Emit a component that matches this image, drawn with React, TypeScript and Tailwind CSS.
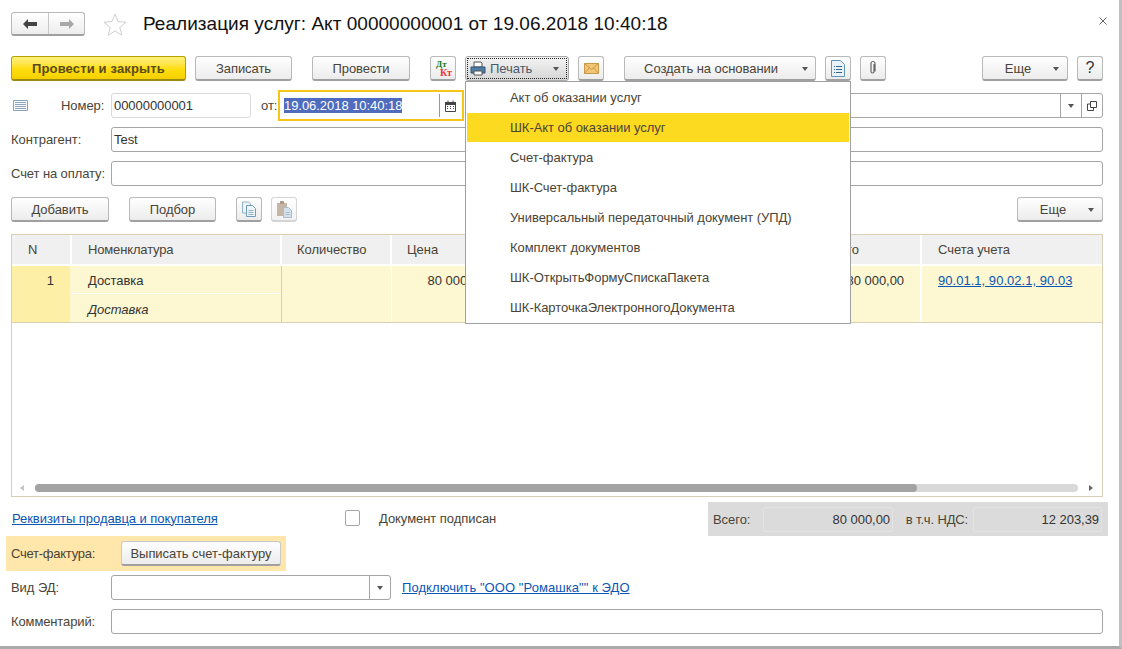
import type { ReactNode } from 'react';

const Caret = () => <span className="w-0 h-0 border-x-[3.5px] border-x-transparent border-t-[4px] border-t-[#555] inline-block" />;

const Btn = ({ className = '', children }: { className?: string; children?: ReactNode }) => (
  <div className={`h-[25px] flex items-center justify-center rounded-[3px] border border-[#b9b9b9] border-b-[2px] border-b-[#a0a0a0] bg-gradient-to-b from-white to-[#ececec] text-[#4a4436] ${className}`}>
    {children}
  </div>
);

const Field = ({ className = '', children }: { className?: string; children?: ReactNode }) => (
  <div className={`h-[25px] flex items-center rounded-[3px] border border-[#a5a5a5] bg-white pl-[2px] text-[#333] ${className}`}>
    {children}
  </div>
);

const Label = ({ className = '', children }: { className?: string; children?: ReactNode }) => (
  <span className={`text-[#4a4436] ${className}`}>{children}</span>
);

const menuItems = [
  'Акт об оказании услуг',
  'ШК-Акт об оказании услуг',
  'Счет-фактура',
  'ШК-Счет-фактура',
  'Универсальный передаточный документ (УПД)',
  'Комплект документов',
  'ШК-ОткрытьФормуСпискаПакета',
  'ШК-КарточкаЭлектронногоДокумента',
];

const DocIcon = () => (
  <svg width="14" height="17" viewBox="0 0 14 17">
    <path d="M.5.500h9l4 4v12H.5z" fill="#eaf2f8" stroke="#5f93b8" />
    <path d="M3 6.500h1M5 6.500h6M3 9.500h1M5 9.500h6M3 12.500h1M5 12.500h6" stroke="#2f6690" />
  </svg>
);

const App = () => {
  return (
    <div className="w-[1122px] h-[649px] bg-white overflow-hidden relative text-[13px] leading-none tracking-[-0.05px]" style={{ fontFamily: '"Liberation Sans", Arial, sans-serif' }}>
      <div className="w-[1122px] h-[649px] border-r-[3px] border-r-[#c0c0c0] border-b-[3px] border-b-[#a9a9a9]">
        <div className="w-full h-full pl-[11px] pr-[16px] flex flex-col">
          {/* header */}
          <div className="h-[56px] pt-[12px] flex items-start">
            <div className="h-[24px] w-[74px] flex rounded-[3px] border border-[#b9b9b9] border-b-[2px] border-b-[#a0a0a0] bg-gradient-to-b from-white to-[#ededed]">
              <div className="w-[37px] flex items-center justify-center border-r border-[#c8c8c8]">
                <svg width="14" height="10" viewBox="0 0 14 10"><path d="M0 5l5-5v3h9v4H5v3z" fill="#444" /></svg>
              </div>
              <div className="flex-1 flex items-center justify-center">
                <svg width="14" height="10" viewBox="0 0 14 10"><path d="M14 5L9 0v3H0v4h9v3z" fill="#a8a8a8" /></svg>
              </div>
            </div>
            <svg className="ml-[18px] mt-[1px]" width="24" height="23" viewBox="0 0 24 23">
              <path d="M12 1l3 7.600 8 .6-6.200 5.100 2 7.900L12 17.900 5.200 22.300l2-7.900L1 9.200l8-.6z" fill="#fff" stroke="#cfcfcf" />
            </svg>
            <h1 className="ml-[16px] text-[19px] leading-[24px] text-[#111] whitespace-nowrap tracking-[0.03px] font-normal">Реализация услуг: Акт 00000000001 от 19.06.2018 10:40:18</h1>
            <svg className="ml-auto -mr-[4px] mt-[5px]" width="8" height="8" viewBox="0 0 8 8"><path d="M.5.500l7 7M7.500.500l-7 7" stroke="#666" /></svg>
          </div>

          {/* command bar */}
          <div className="h-[25px] flex items-start">
            <div className="w-[175px] h-[25px] flex items-center justify-center rounded-[3px] border border-[#b8a000] border-b-[2px] border-b-[#9c8a10] bg-gradient-to-b from-[#fff27a] via-[#ffdf10] to-[#f5d000] font-bold text-[#5a4a1e] tracking-[0.15px]">Провести и закрыть</div>
            <Btn className="w-[97px] ml-[9px]">Записать</Btn>
            <Btn className="w-[98px] ml-[20px]">Провести</Btn>
            <Btn className="w-[26px] ml-[20px]">
              <span className="relative block w-[20px] h-[19px] font-bold" style={{ fontFamily: '"Liberation Serif", serif' }}>
                <span className="absolute left-[3px] top-[1px] text-[#1b7a1b] text-[9px]">Дт</span>
                <span className="absolute left-[7px] top-[9px] text-[#f03030] text-[10px]">Кт</span>
              </span>
            </Btn>
            <div className="w-[104px] ml-[9px] h-[25px] p-[1px] rounded-[3px] border border-[#a9a9a9] bg-gradient-to-b from-[#f4f4f4] to-[#d6d6d6]">
              <div className="h-full flex items-center border border-dotted border-[#222] pl-[2px] pr-[7px]">
                <svg width="16" height="15" viewBox="0 0 16 15">
                  <path d="M4 1h7l1 1v4H4z" fill="#fff" stroke="#555" />
                  <path d="M1 6h14v6H1z" fill="#4f7da3" stroke="#2f5675" />
                  <path d="M4 10h8v4H4z" fill="#fff" stroke="#555" />
                </svg>
                <span className="ml-[4px] text-[#4a5a6a]">Печать</span>
                <span className="ml-auto flex"><Caret /></span>
              </div>
            </div>
            <Btn className="w-[26px] ml-[9px]">
              <svg width="15" height="11" viewBox="0 0 15 11">
                <path d="M.5.500h14v10H.5z" fill="#f3c677" stroke="#c99a45" />
                <path d="M.5.500l7 6 7-6M.5 10.500l5-6M14.500 10.500l-5-6" fill="none" stroke="#c99a45" />
              </svg>
            </Btn>
            <Btn className="w-[192px] ml-[20px] relative pr-[18px]">
              Создать на основании
              <span className="absolute right-[7px] top-[10px] flex"><Caret /></span>
            </Btn>
            <Btn className="w-[26px] ml-[9px]"><DocIcon /></Btn>
            <Btn className="w-[26px] ml-[9px]">
              <svg width="8" height="16" viewBox="0 0 8 16">
                <path d="M5 4v7.500a1.500 1.500 0 01-3 0V3.500a2 2 0 014 0V11.500" fill="none" stroke="#666" strokeWidth="1.200" />
              </svg>
            </Btn>
            <Btn className="w-[86px] ml-auto relative pr-[14px]">
              Еще
              <span className="absolute right-[8px] top-[10px] flex"><Caret /></span>
            </Btn>
            <Btn className="w-[26px] ml-[9px] text-[16px] text-[#333]">?</Btn>
          </div>

          {/* number row */}
          <div className="h-[25px] mt-[12px] flex items-center">
            <svg className="ml-[2px] shrink-0" width="15" height="11" viewBox="0 0 15 11">
              <path d="M.5.500h14v10H.5z" fill="#f7fafc" stroke="#8aa3b5" />
              <path d="M2 2.500h11M2 4.500h11M2 6.500h11M2 8.500h11" stroke="#8fa8b8" />
            </svg>
            <Label className="ml-[33px] w-[50px]">Номер:</Label>
            <Field className="w-[140px] !border-[#d9d9d9]">00000000001</Field>
            <Label className="ml-[10px] w-[17px]">от:</Label>
            <div className="w-[186px] h-[31px] -my-[3px] border-[2px] border-[#f5c518] flex items-center pl-[4px]">
              <span className="bg-[#4f6bbd] text-white h-[15px] leading-[15px] whitespace-nowrap">19.06.2018 10:40:18</span>
              <span className="ml-auto flex items-center h-[23px] border-l border-[#999] pl-[5px] pr-[6px]">
                <svg width="11" height="12" viewBox="0 0 11 12">
                  <path d="M.5 2.500h10v9H.5z" fill="#fff" stroke="#444" />
                  <path d="M.5 2.500h10v2H.5zM3 .500v2M8 .500v2" fill="#444" stroke="#444" />
                  <path d="M2 6.500h1M5 6.500h1M8 6.500h1M2 8.500h1M5 8.500h1M8 8.500h1" stroke="#444" />
                </svg>
              </span>
            </div>
            <div className="ml-[3px] flex-1 h-[25px] flex justify-end items-stretch rounded-[3px] border border-[#a5a5a5] bg-white">
              <span className="w-[21px] flex items-center justify-center border-l border-[#a5a5a5]"><Caret /></span>
              <span className="w-[21px] flex items-center justify-center border-l border-[#a5a5a5]">
                <svg width="10" height="10" viewBox="0 0 10 10"><path d="M3.500.500h6v6h-6zM3.500 3H.500v6.500H6.500V6.500" fill="none" stroke="#444" /></svg>
              </span>
            </div>
          </div>

          {/* counterparty */}
          <div className="h-[25px] mt-[9px] flex items-center">
            <Label className="w-[100px]">Контрагент:</Label>
            <Field className="flex-1">Test</Field>
          </div>
          <div className="h-[25px] mt-[9px] flex items-center">
            <Label className="w-[100px] whitespace-nowrap tracking-[-0.1px]">Счет на оплату:</Label>
            <Field className="flex-1" />
          </div>

          {/* table toolbar */}
          <div className="h-[25px] mt-[11px] flex items-start">
            <Btn className="w-[98px]">Добавить</Btn>
            <Btn className="w-[87px] ml-[20px]">Подбор</Btn>
            <Btn className="w-[26px] ml-[20px]">
              <svg width="16" height="16" viewBox="0 0 16 16">
                <path d="M1.500 1h6l2 2v9h-8z" fill="#eef4f8" stroke="#8fb2c8" />
                <path d="M5.500 4.500h6l3 3v8h-9z" fill="#eef4f8" stroke="#6f9cb8" />
                <path d="M7.500 9.500h5M7.500 11.500h5M7.500 13.500h5" stroke="#8fb2c8" />
              </svg>
            </Btn>
            <div className="w-[26px] h-[25px] ml-[9px] flex items-center justify-center rounded-[3px] border border-[#d4d4d4] border-b-[2px] bg-gradient-to-b from-white to-[#f2f2f2]">
              <svg width="17" height="18" viewBox="0 0 17 18">
                <path d="M1 3h10v13H1z" fill="#c5b6a8" />
                <path d="M4 1h4v3H4z" fill="#a89a8e" />
                <path d="M7.500 7.500h5l3 3v7h-8z" fill="#d5e0e8" stroke="#a8bccb" />
                <path d="M9.500 12.500h4M9.500 14.500h4" stroke="#a8bccb" />
              </svg>
            </div>
            <Btn className="w-[86px] ml-auto relative pr-[14px]">
              Еще
              <span className="absolute right-[8px] top-[10px] flex"><Caret /></span>
            </Btn>
          </div>

          {/* table */}
          <div className="h-[263px] mt-[12px] border border-[#d8d0b4] relative flex flex-col">
            <div className="h-[31px] flex bg-[#f0f0f0] border-b-[2px] border-white text-[#4a4436] shrink-0">
              <div className="w-[60px] pl-[16px] pt-[8px] border-r-[2px] border-white">N</div>
              <div className="w-[210px] pl-[16px] pt-[8px] border-r-[2px] border-white tracking-[-0.15px]">Номенклатура</div>
              <div className="w-[110px] pl-[15px] pt-[8px] border-r-[2px] border-white">Количество</div>
              <div className="w-[530px] pl-[15px] pt-[8px] border-r-[2px] border-white relative">
                Цена
                <span className="absolute left-[433px] top-[8px]">Всего</span>
              </div>
              <div className="flex-1 pl-[16px] pt-[8px]">Счета учета</div>
            </div>
            <div className="h-[57px] flex bg-[#fdf7d2] border-b border-[#d8d0b4] shrink-0 text-[#333]">
              <div className="w-[60px] bg-[#fdf0a6] text-right pr-[16px] pt-[8px] border-r-[2px] border-[#fdf7d2]">1</div>
              <div className="w-[210px] border-r border-[#d8d0b4] flex flex-col">
                <div className="h-[28px] pl-[16px] pt-[8px] border-b border-white">Доставка</div>
                <div className="pl-[16px] pt-[9px] italic">Доставка</div>
              </div>
              <div className="w-[110px] border-r border-white" />
              <div className="w-[108px] text-right pr-[15px] pt-[8px] whitespace-nowrap">80 000,00</div>
              <div className="w-[422px] border-r-[2px] border-white text-right pt-[8px] pr-[16px]">80 000,00</div>
              <div className="flex-1 pl-[16px] pt-[8px]"><span className="text-[#0b55b5] underline tracking-[0.03px]">90.01.1, 90.02.1, 90.03</span></div>
            </div>
            <div className="mt-auto mb-[4px] h-[8px] flex items-center pl-[8px] pr-[9px]">
              <span className="w-0 h-0 border-y-[3px] border-y-transparent border-r-[4px] border-r-[#c4c4c4]" />
              <div className="ml-[11px] flex-1 h-[8px] rounded-full bg-[#d9d9d9] flex">
                <div className="w-[882px] rounded-full bg-[#a3a3a3]" />
              </div>
              <span className="ml-[11px] w-0 h-0 border-y-[3px] border-y-transparent border-l-[4px] border-l-[#666]" />
            </div>
          </div>

          {/* totals row */}
          <div className="h-[36px] mt-[3px] flex items-center">
            <a className="w-[334px] pl-[1px] text-[#0b55b5] underline whitespace-nowrap">Реквизиты продавца и покупателя</a>
            <span className="w-[15px] h-[16px] rounded-[2px] border border-[#a5a5a5] bg-white" />
            <Label className="ml-[19px]">Документ подписан</Label>
            <div className="ml-auto -mr-[5px] self-end w-[400px] h-[34px] bg-[#dbdbdb] flex items-center pl-[5px] pr-[6px] text-[#4a4436]">
              <span className="w-[50px]">Всего:</span>
              <span className="w-[130px] h-[25px] flex items-center justify-end pr-[2px] border border-[#e3e3e3] rounded-[2px] text-[#333]">80 000,00</span>
              <span className="w-[80px] text-right pr-[5px] whitespace-nowrap tracking-[-0.15px]">в т.ч. НДС:</span>
              <span className="flex-1 h-[25px] flex items-center justify-end pr-[2px] border border-[#e3e3e3] rounded-[2px] text-[#333]">12 203,39</span>
            </div>
          </div>

          {/* invoice block */}
          <div className="h-[35px] w-[280px] -ml-[5px] flex items-center bg-[#ffe6ab] pl-[5px]">
            <Label className="w-[110px] tracking-[-0.25px]">Счет-фактура:</Label>
            <Btn className="w-[160px] border-[#c9c9c9]">Выписать счет-фактуру</Btn>
          </div>

          <div className="h-[25px] mt-[4px] flex items-center">
            <Label className="w-[100px]">Вид ЭД:</Label>
            <div className="w-[280px] h-[25px] flex justify-end rounded-[3px] border border-[#a5a5a5]">
              <span className="w-[21px] flex items-center justify-center border-l border-[#a5a5a5]"><Caret /></span>
            </div>
            <a className="ml-[11px] text-[#0b55b5] underline whitespace-nowrap tracking-[0.07px]">Подключить "ООО "Ромашка"" к ЭДО</a>
          </div>

          <div className="h-[25px] mt-[9px] flex items-center">
            <Label className="w-[100px] tracking-[-0.12px]">Комментарий:</Label>
            <Field className="flex-1" />
          </div>
        </div>
      </div>

      {/* print dropdown */}
      <div className="absolute left-[465px] top-[81px] w-[386px] h-[243px] bg-white border border-[#a0a0a0] pt-[1px] px-[1px] text-[#4a4436]">
        {menuItems.map((item, i) => (
          <div key={item} className={`h-[30px] flex items-center pl-[43px] whitespace-nowrap border-b border-transparent bg-clip-padding ${i === 1 ? 'bg-[#fcda1f]' : ''}`}>{item}</div>
        ))}
      </div>
    </div>
  );
};

export default App;
